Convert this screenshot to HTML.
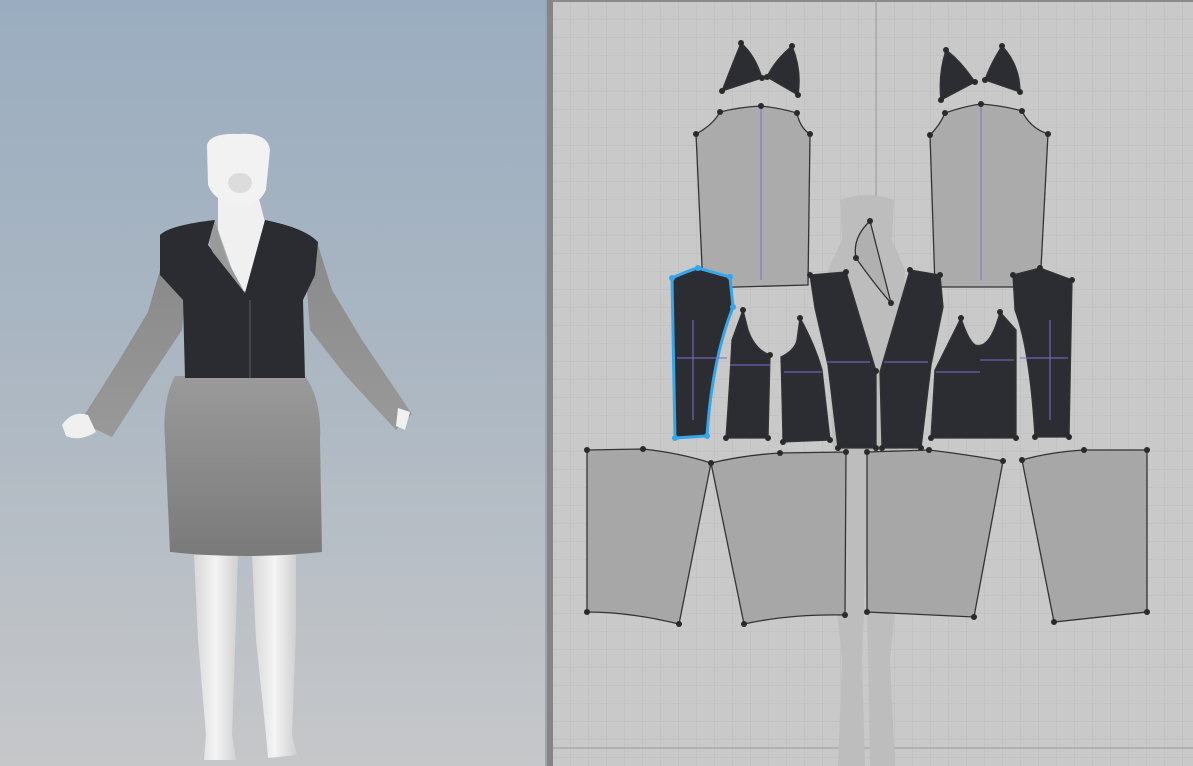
<!DOCTYPE html>
<html><head><meta charset="utf-8"><style>
html,body{margin:0;padding:0;width:1193px;height:766px;overflow:hidden;background:#c8c8c8}
svg{display:block}
</style></head><body>
<svg width="1193" height="766" viewBox="0 0 1193 766" xmlns="http://www.w3.org/2000/svg">
<defs>
<linearGradient id="bg" x1="0" y1="0" x2="0" y2="1">
<stop offset="0" stop-color="#9aadc0"/><stop offset="0.45" stop-color="#aab6c2"/><stop offset="1" stop-color="#c6c7c9"/>
</linearGradient>
<pattern id="grid" x="553" y="2" width="18" height="18" patternUnits="userSpaceOnUse">
<rect width="18" height="18" fill="#c9c9c9"/>
<path d="M18 0V18M0 18H18" stroke="#bdbdbd" stroke-width="1" fill="none"/>
</pattern>
<linearGradient id="skirt" x1="0" y1="0" x2="0" y2="1">
<stop offset="0" stop-color="#9a9a9a"/><stop offset="1" stop-color="#7a7a7a"/></linearGradient>
<linearGradient id="leg" x1="0" y1="0" x2="1" y2="0">
<stop offset="0" stop-color="#d8d8d8"/><stop offset="0.5" stop-color="#f4f4f4"/><stop offset="1" stop-color="#cfcfcf"/></linearGradient>
<linearGradient id="arm" x1="0" y1="0" x2="0" y2="1">
<stop offset="0" stop-color="#8a8a8a"/><stop offset="1" stop-color="#999"/></linearGradient>
</defs>
<rect x="0" y="0" width="547" height="766" fill="url(#bg)"/>
<path d="M194 555 L238 555 L236 620 L232 735 L236 760 L204 760 L206 735 L198 640 Z" fill="url(#leg)"/>
<path d="M252 555 L296 555 L296 630 L292 735 L297 755 L268 758 L266 735 L256 640 Z" fill="url(#leg)"/>
<!-- arms -->
<path d="M160 270 L186 285 L182 330 L150 378 L112 437 L80 422 L118 362 L148 312 Z" fill="url(#arm)"/>
<path d="M305 265 L318 245 L332 290 L362 340 L412 414 L396 430 L346 376 L310 330 Z" fill="url(#arm)"/>
<path d="M62 425 Q72 410 88 415 L96 432 Q80 442 66 436 Z" fill="#f0f0f0"/>
<path d="M398 408 L410 412 L405 430 L396 426 Z" fill="#f0f0f0"/>
<path d="M175 376 L305 376 Q322 400 320 440 L322 552 Q245 560 170 552 L165 440 Q162 400 175 376 Z" fill="url(#skirt)"/>
<path d="M218 195 L258 195 L265 222 L250 290 L240 292 L218 230 Z" fill="#f0f0f0"/>
<path d="M207 145 Q210 133 238 134 Q268 132 270 150 L266 190 Q258 207 240 205 Q215 203 208 185 Z" fill="#f2f2f2"/>
<ellipse cx="240" cy="183" rx="12" ry="10" fill="#dcdcdc"/>
<path d="M160 235 Q170 225 215 220 L208 245 L245 293 L265 220 Q305 228 318 242 L315 275 L303 300 L305 378 L185 378 L183 300 L160 275 Z" fill="#2b2c31"/>
<path d="M215 222 Q205 245 215 255 L245 293 L228 262 Z" fill="#9a9a9a"/>
<path d="M250 300V378" stroke="#6a6a70" stroke-width="0.8"/>
<rect x="545" y="0" width="3" height="766" fill="#9aa6b2"/>
<rect x="547" y="0" width="6" height="766" fill="#858585"/>
<rect x="553" y="0" width="640" height="766" fill="url(#grid)"/>
<rect x="553" y="0" width="640" height="2" fill="#8a8a8a"/>
<line x1="876" y1="0" x2="876" y2="766" stroke="#9a9a9a" stroke-width="1"/>
<line x1="553" y1="748" x2="1193" y2="748" stroke="#9a9a9a" stroke-width="1"/>
<g fill="#bdbdbd">
<path d="M840 200 Q866 190 894 200 L892 240 L905 270 L900 440 L895 470 L900 560 L890 660 L895 766 L870 766 L868 660 L866 560 L862 660 L865 766 L838 766 L842 660 L832 560 L838 470 L832 440 L828 270 L842 240 Z"/>
</g>
<g stroke="#333" stroke-width="1.3">
<path d="M741 43 Q730 70 722 91 L762 78 Q755 55 741 43Z M792 46 Q775 60 767 77 L798 95 Q802 70 792 46Z" fill="#2c2d33"/>
<path d="M946 50 Q938 75 941 100 L975 82 Q960 60 946 50Z M1002 46 Q990 65 985 80 L1020 92 Q1020 65 1002 46Z" fill="#2c2d33"/>
<path d="M720 112 Q740 107 761 106 Q780 108 797 113 Q800 128 810 134 L808 285 L703 288 L696 134 Q713 125 720 112Z" fill="#ababab"/>
<path d="M945 113 Q965 106 981 104 Q1005 106 1022 111 Q1030 128 1048 134 L1040 287 L935 287 L930 135 Q940 125 945 113Z" fill="#ababab"/>
<path d="M870 221 Q852 238 856 258 Q875 285 891 303 Z" fill="#b0b0b0"/>
<path d="M672 278 Q690 270 698 268 L730 277 L733 307 Q712 360 707 436 L675 438 Z" fill="#2c2d33" stroke="#36a6ea" stroke-width="3"/>
<path d="M743 310 L748 330 Q755 350 770 355 L768 438 L726 438 Q730 380 732 340 Z" fill="#2c2d33"/>
<path d="M800 318 Q815 345 822 370 L830 440 L783 442 Q782 390 781 357 Q795 350 797 340 Z" fill="#2c2d33"/>
<path d="M810 275 L846 272 L876 371 L876 448 L838 448 L828 365 L815 308 Z" fill="#2c2d33"/>
<path d="M910 270 L940 275 L943 307 L931 365 L921 448 L882 448 L880 372 Z" fill="#2c2d33"/>
<path d="M961 318 Q968 340 975 345 Q990 350 1000 312 L1016 330 L1016 438 L931 438 L935 370 Z" fill="#2c2d33"/>
<path d="M1013 275 L1040 268 L1072 280 L1069 437 L1035 437 Q1030 350 1015 310 Z" fill="#2c2d33"/>
<path d="M587 450 L643 449 Q680 453 711 463 L679 624 Q630 612 587 612 Z" fill="#a7a7a7"/>
<path d="M711 463 Q745 455 780 453 L846 452 L845 615 Q790 614 744 624 Z" fill="#a7a7a7"/>
<path d="M867 452 L929 450 Q970 455 1003 461 L974 617 L867 612 Z" fill="#a7a7a7"/>
<path d="M1022 460 Q1050 452 1084 450 L1147 450 L1147 612 L1054 622 Z" fill="#a7a7a7"/>
</g>
<g stroke="#7b6fd0" stroke-width="1" fill="none">
<path d="M761 108V280M981 106V280M693 320V420M677 358H727M1050 320V420M1020 358H1068M730 365H770M784 372H822M826 362H870M884 362H928M936 372H980M980 360H1014"/>
</g>
<g fill="#2a2a2a">
<circle cx="741" cy="43" r="3"/><circle cx="722" cy="91" r="3"/><circle cx="762" cy="78" r="3"/><circle cx="792" cy="46" r="3"/><circle cx="767" cy="77" r="3"/><circle cx="798" cy="95" r="3"/>
<circle cx="946" cy="50" r="3"/><circle cx="941" cy="100" r="3"/><circle cx="975" cy="82" r="3"/><circle cx="1002" cy="46" r="3"/><circle cx="985" cy="80" r="3"/><circle cx="1020" cy="92" r="3"/>
<circle cx="720" cy="112" r="3"/><circle cx="761" cy="106" r="3"/><circle cx="797" cy="113" r="3"/><circle cx="810" cy="134" r="3"/><circle cx="696" cy="134" r="3"/>
<circle cx="945" cy="113" r="3"/><circle cx="981" cy="104" r="3"/><circle cx="1022" cy="111" r="3"/><circle cx="1048" cy="134" r="3"/><circle cx="930" cy="135" r="3"/>
<circle cx="870" cy="221" r="3"/><circle cx="856" cy="258" r="3"/><circle cx="891" cy="303" r="3"/>
<circle cx="743" cy="310" r="3"/><circle cx="770" cy="355" r="3"/><circle cx="768" cy="438" r="3"/><circle cx="726" cy="438" r="3"/>
<circle cx="800" cy="318" r="3"/><circle cx="830" cy="440" r="3"/><circle cx="783" cy="442" r="3"/>
<circle cx="810" cy="275" r="3"/><circle cx="846" cy="272" r="3"/><circle cx="876" cy="371" r="3"/><circle cx="876" cy="448" r="3"/><circle cx="838" cy="448" r="3"/>
<circle cx="910" cy="270" r="3"/><circle cx="940" cy="275" r="3"/><circle cx="921" cy="448" r="3"/><circle cx="882" cy="448" r="3"/>
<circle cx="961" cy="318" r="3"/><circle cx="1000" cy="312" r="3"/><circle cx="1016" cy="438" r="3"/><circle cx="931" cy="438" r="3"/>
<circle cx="1013" cy="275" r="3"/><circle cx="1040" cy="268" r="3"/><circle cx="1072" cy="280" r="3"/><circle cx="1069" cy="437" r="3"/><circle cx="1035" cy="437" r="3"/>
<circle cx="587" cy="450" r="3"/><circle cx="643" cy="449" r="3"/><circle cx="711" cy="463" r="3"/><circle cx="679" cy="624" r="3"/><circle cx="587" cy="612" r="3"/>
<circle cx="780" cy="453" r="3"/><circle cx="846" cy="452" r="3"/><circle cx="845" cy="615" r="3"/><circle cx="744" cy="624" r="3"/>
<circle cx="867" cy="452" r="3"/><circle cx="929" cy="450" r="3"/><circle cx="1003" cy="461" r="3"/><circle cx="974" cy="617" r="3"/><circle cx="867" cy="612" r="3"/>
<circle cx="1022" cy="460" r="3"/><circle cx="1084" cy="450" r="3"/><circle cx="1147" cy="450" r="3"/><circle cx="1147" cy="612" r="3"/><circle cx="1054" cy="622" r="3"/>
</g>
<g fill="#36a6ea"><circle cx="672" cy="278" r="3"/><circle cx="698" cy="268" r="3"/><circle cx="730" cy="277" r="3"/><circle cx="733" cy="307" r="3"/><circle cx="707" cy="436" r="3"/><circle cx="675" cy="438" r="3"/></g>
</svg>
</body></html>
